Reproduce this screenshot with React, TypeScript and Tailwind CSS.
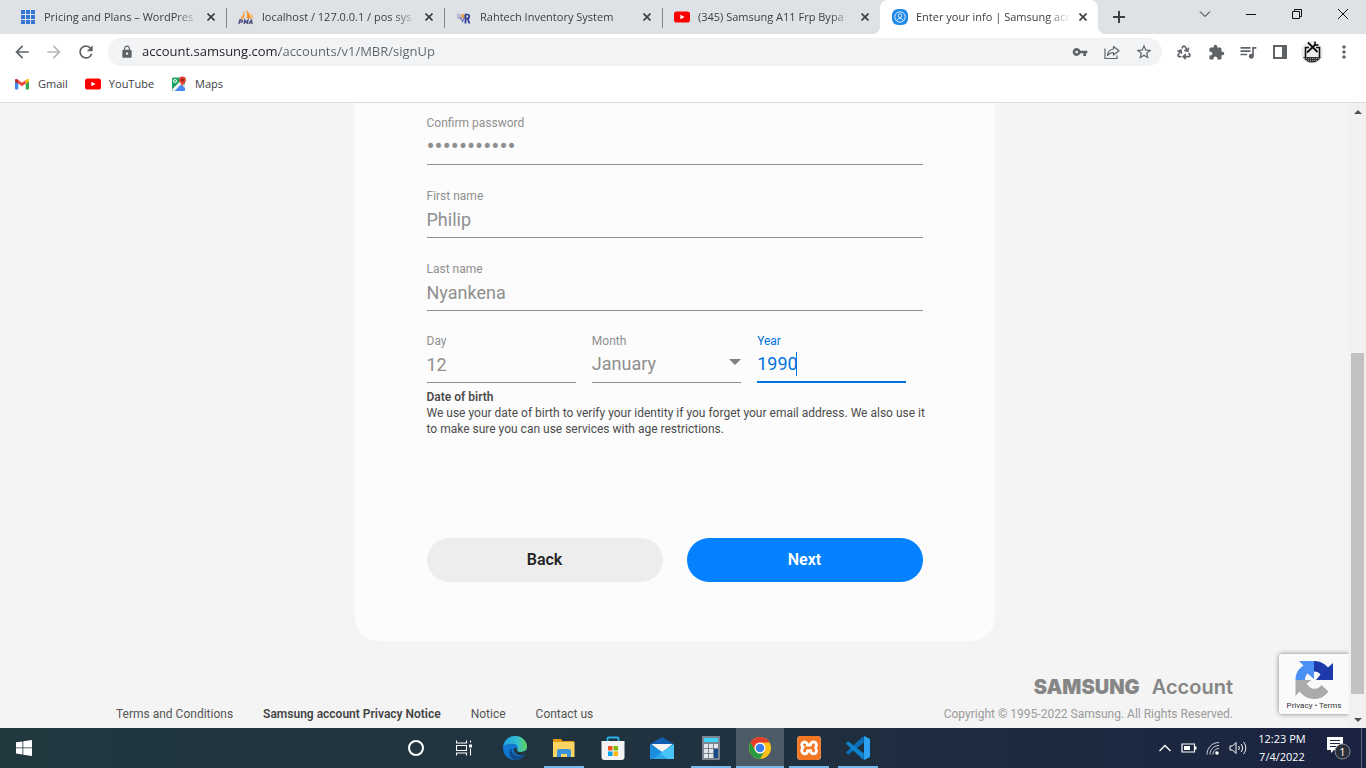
import { useState } from 'react';
import type { ReactNode } from 'react';
import { Recycle } from 'lucide-react';
import {
  MdArrowBack,
  MdArrowForward,
  MdExtension,
  MdLock,
  MdMoreVert,
  MdQueueMusic,
  MdRefresh,
  MdStarBorder,
  MdVpnKey,
} from 'react-icons/md';
import { SiXampp } from 'react-icons/si';

const months = [
  'January', 'February', 'March', 'April', 'May', 'June',
  'July', 'August', 'September', 'October', 'November', 'December',
];

/* ---------- favicons ---------- */

function GridIcon() {
  return (
    <svg className="w-4 h-4" viewBox="0 0 16 16" fill="#3376d6">
      {[1, 6, 11].map(y => [1, 6, 11].map(x => <rect key={`${x}-${y}`} x={x} y={y} width="4" height="4" />))}
    </svg>
  );
}

function PmaIcon() {
  return (
    <svg className="w-4 h-4" viewBox="0 0 16 16">
      <path d="M6 1.500C7 4 6.800 7 5.500 9.500L2 10C4 8 5.500 5 6 1.500z" fill="#f9a13a" />
      <path d="M8 1c3 2 4.500 5 5 8.500L8.500 9C9.500 6 9.300 3.500 8 1z" fill="#f7931e" />
      <path d="M12 3.500c2 1.500 3 3.500 3.500 6L13.500 9.500C13.500 7 13 5 12 3.500z" fill="#f9b866" />
      <path d="M1 15l.8-4h1.700c1.500 0 1.300 2.200-.3 2.200H1.500M6 15l.8-4L8 13.500 10 11l-.6 4M11 15l2.300-4 .9 4M12 13.700h2" fill="none" stroke="#4b4f7d" strokeWidth="1.300" />
    </svg>
  );
}

function RahtechIcon() {
  return (
    <svg className="w-4 h-4" viewBox="0 0 16 16" fill="none">
      <path d="M1.500 6.500c0-2 2.500-2 2.500 0v3M1.500 6.500c0 2 1 3 2.500 3.500" stroke="#a9a3c4" strokeWidth="1.200" />
      <circle cx="7" cy="7" r="2" fill="#e9a13c" />
      <path d="M4.500 8l2 4.500L8.500 8" stroke="#6d6fb2" strokeWidth="1.200" />
      <path d="M9.500 14.500V5.500h1.800c2.500 0 2.500 4 0 4H10M11.500 9.500l2 5" stroke="#2b3a93" strokeWidth="1.700" />
    </svg>
  );
}

function YoutubeIcon() {
  return (
    <svg className="w-4 h-4" viewBox="0 0 16 16">
      <rect y="2.500" width="16" height="11" rx="2.600" fill="#f00" />
      <path d="M6.400 5.700v4.600L10.500 8z" fill="#fff" />
    </svg>
  );
}

function SamsungIcon() {
  return (
    <svg className="w-4 h-4" viewBox="0 0 16 16" fill="none">
      <rect width="16" height="16" rx="6" fill="#2189e8" />
      <circle cx="8" cy="8" r="5.200" stroke="#d5eafd" />
      <circle cx="8" cy="6.600" r="1.800" stroke="#d5eafd" />
      <path d="M4.800 11.700c.7-3 5.700-3 6.400 0" stroke="#d5eafd" />
    </svg>
  );
}

function GmailIcon() {
  return (
    <svg className="w-4 h-4" viewBox="0 0 16 16">
      <path d="M1 4.500v8a1 1 0 0 0 1 1h2.300V6.800z" fill="#4285f4" />
      <path d="M15 4.500v8a1 1 0 0 1-1 1h-2.300V6.800z" fill="#34a853" />
      <path d="M4.300 4v3.500L8 10.200l3.700-2.700V4L8 6.700z" fill="#ea4335" />
      <path d="M1 4.200v1.200l3.300 2.400V4C3 2.700 1 2.700 1 4.200z" fill="#c5221f" />
      <path d="M15 4.200v1.200l-3.300 2.400V4C13 2.700 15 2.700 15 4.200z" fill="#fbbc04" />
    </svg>
  );
}

function MapsIcon() {
  return (
    <svg className="w-4 h-4" viewBox="0 0 16 16">
      <rect x="1" y="1.500" width="13" height="13.500" rx="1.500" fill="#1fa463" />
      <path d="M2 15L9.500 7.500 14 12v1.500a1.500 1.500 0 0 1-1.500 1.500z" fill="#4a89f3" />
      <path d="M1 13.500L13 1.500h1v3L3.500 15H2.300z" fill="#f5f5f5" />
      <path d="M9.500 7.500l4.500 4.700V8z" fill="#dadce0" />
      <circle cx="4" cy="5" r="1.500" fill="none" stroke="#fff" />
      <path d="M11.500.5a3.500 3.500 0 0 0-3.500 3.500c0 2.400 2.600 3 3.500 6.500.9-3.500 3.500-4.100 3.500-6.500A3.500 3.500 0 0 0 11.500.5z" fill="#e0402f" />
      <circle cx="11.500" cy="4" r="1.200" fill="#7d1d14" />
    </svg>
  );
}

/* ---------- browser chrome ---------- */

interface TabInfo {
  title: string;
  icon: ReactNode;
  active?: boolean;
  divider?: boolean;
}

const tabs: TabInfo[] = [
  { title: 'Pricing and Plans – WordPres', icon: <GridIcon />, divider: true },
  { title: 'localhost / 127.0.0.1 / pos sys', icon: <PmaIcon />, divider: true },
  { title: 'Rahtech Inventory System', icon: <RahtechIcon />, divider: true },
  { title: '(345) Samsung A11 Frp Bypa', icon: <YoutubeIcon /> },
  { title: 'Enter your info | Samsung acc', icon: <SamsungIcon />, active: true },
];

function Tab({ title, icon, active, divider }: TabInfo) {
  return (
    <div
      className={`relative flex items-center w-[218px] h-[34px] pl-3 pr-[7px] ${active ? 'bg-white rounded-t-lg' : ''}`}
    >
      {icon}
      <span className="ml-2 flex-1 min-w-0 overflow-hidden whitespace-nowrap text-[11px] text-[#3c4043] [mask-image:linear-gradient(to_right,black_85%,transparent)]">
        {title}
      </span>
      <button aria-label="Close tab" className="ml-1 w-4 h-4 flex items-center justify-center">
        <svg className="w-2 h-2" viewBox="0 0 8 8" stroke="#3c4043" strokeWidth="1.700">
          <path d="M.5.5l7 7M7.500.5l-7 7" />
        </svg>
      </button>
      {divider && <span className="absolute -right-px top-2 w-px h-5 bg-[#80868b]" />}
      {active && (
        <>
          <span className="absolute -left-2 bottom-0 w-2 h-2 bg-[radial-gradient(circle_at_0_0,transparent_8px,white_8px)]" />
          <span className="absolute -right-2 bottom-0 w-2 h-2 bg-[radial-gradient(circle_at_100%_0,transparent_8px,white_8px)]" />
        </>
      )}
    </div>
  );
}

function WindowButton({ label, children }: { label: string; children: ReactNode }) {
  return (
    <button aria-label={label} className="w-[46px] h-7 flex items-center justify-center">
      <svg className="w-3 h-3" viewBox="0 0 12 12" fill="none" stroke="#111" strokeWidth="1">
        {children}
      </svg>
    </button>
  );
}

function TabStrip() {
  return (
    <div className="flex h-[34px] pl-2 bg-[#dee1e6] shrink-0">
      {tabs.map(t => <Tab key={t.title} {...t} />)}
      <button aria-label="New tab" className="ml-[7px] w-7 h-[34px] flex items-center justify-center">
        <svg className="w-3 h-3" viewBox="0 0 12 12" stroke="#3c4043" strokeWidth="2">
          <path d="M6 0v12M0 6h12" />
        </svg>
      </button>
      <div className="flex ml-auto">
        <WindowButton label="Search tabs"><path d="M1 3.500l5 5 5-5" /></WindowButton>
        <WindowButton label="Minimize"><path d="M1 6.500h10" /></WindowButton>
        <WindowButton label="Restore"><path d="M1.500 3.500h7v7h-7zM3.500 3.500v-2h7v7h-2" /></WindowButton>
        <WindowButton label="Close"><path d="M1 1l10 10M11 1L1 11" /></WindowButton>
      </div>
    </div>
  );
}

function IconButton({ label, children }: { label: string; children: ReactNode }) {
  return (
    <button aria-label={label} className="w-8 h-7 flex items-center justify-center text-[#5f6368]">
      {children}
    </button>
  );
}

function Toolbar() {
  const [url, setUrl] = useState('account.samsung.com/accounts/v1/MBR/signUp');

  return (
    <div className="flex items-center h-9 pl-1.5 pr-1.5 bg-white shrink-0">
      <IconButton label="Back"><MdArrowBack size={20} /></IconButton>
      <IconButton label="Forward"><MdArrowForward size={20} className="text-[#b4b7ba]" /></IconButton>
      <IconButton label="Reload"><MdRefresh size={20} /></IconButton>
      <div className="flex flex-1 items-center h-7 ml-1.5 pl-3 pr-0.5 rounded-full bg-[#f1f3f4]">
        <MdLock size={14} className="text-[#5f6368]" />
        {/* the host part is darker than the path */}
        <input
          aria-label="Address"
          value={url}
          onChange={e => setUrl(e.target.value)}
          className="ml-2 flex-1 min-w-0 text-[13px] outline-none text-transparent bg-clip-text bg-[linear-gradient(to_right,#202124_137px,#5f6368_137px)]"
        />
        <IconButton label="Passwords"><MdVpnKey size={16} /></IconButton>
        <IconButton label="Share">
          <svg className="w-4 h-4" viewBox="0 0 16 16" fill="none" stroke="currentColor" strokeWidth="1.200">
            <path d="M1 4.500v10h12V11.500" />
            <path d="M9.500 2.500l5.500 4.200-5.500 4.300V8.500C7 8.500 5 9.500 3.500 11.500 4 7.500 6.500 5.300 9.500 5z" strokeLinejoin="round" />
          </svg>
        </IconButton>
        <IconButton label="Bookmark"><MdStarBorder size={18} /></IconButton>
      </div>
      <div className="flex items-center ml-1.5">
        <IconButton label="Recycle"><Recycle size={16} strokeWidth={2.5} /></IconButton>
        <IconButton label="Extensions"><MdExtension size={17} /></IconButton>
        <IconButton label="Media"><MdQueueMusic size={20} /></IconButton>
        <IconButton label="Side panel">
          <svg className="w-3.5 h-3.5" viewBox="0 0 14 14">
            <path d="M0 0h14v14H0zM2 2v10h7V2z" fill="currentColor" fillRule="evenodd" />
          </svg>
        </IconButton>
        <IconButton label="Profile">
          <svg className="w-[22px] h-[22px]" viewBox="0 0 22 22" fill="none">
            <circle cx="11" cy="11" r="11" fill="#ececec" />
            <path d="M4.500 16V6.500H8M15 6.500h3.500V16" stroke="#111" strokeWidth="1.600" />
            <path d="M7 1.500l9.500 9.500M15 3L6 11.500" stroke="#111" strokeWidth="1.800" />
            <path d="M14 .5v3.500h3.500" stroke="#111" strokeWidth="1.500" />
            <path d="M2 16h18c-1.500 3.500-4.500 5.500-9 5.500S3.500 19.500 2 16z" fill="#333" />
            <path d="M3 17.500h16M5 19.500h12" stroke="#bbb" strokeWidth=".8" strokeDasharray="1 1" />
          </svg>
        </IconButton>
        <IconButton label="Menu"><MdMoreVert size={20} /></IconButton>
      </div>
    </div>
  );
}

function BookmarkBar() {
  return (
    <nav className="flex items-center h-[33px] pl-3.5 pb-1 gap-[17px] bg-white border-b border-[#dadce0] text-[11px] text-[#3c4043] shrink-0">
      <a href="#gmail" className="flex items-center gap-2"><GmailIcon />Gmail</a>
      <a href="#youtube" className="flex items-center gap-2"><YoutubeIcon />YouTube</a>
      <a href="#maps" className="flex items-center gap-2"><MapsIcon />Maps</a>
    </nav>
  );
}

/* ---------- sign up page ---------- */

interface FieldProps {
  id: string;
  label: string;
  value: string;
  onChange: (v: string) => void;
  type?: string;
  active?: boolean;
}

function Field({ id, label, value, onChange, type = 'text', active }: FieldProps) {
  return (
    <div className={`relative flex flex-col ${active ? 'text-[#0072de]' : 'text-[#8f8f8f]'}`}>
      <label htmlFor={id} className="text-xs leading-4">{label}</label>
      <input
        id={id}
        type={type}
        value={value}
        onChange={e => onChange(e.target.value)}
        className={`w-full h-[34px] pb-[3px] outline-none caret-transparent ${type === 'password' ? 'text-2xl' : 'text-lg'} ${active ? 'border-b-2 border-[#0072de]' : 'border-b border-[#8f8f8f]'}`}
      />
      {active && <span className="absolute left-[39px] top-[19px] w-px h-6 bg-[#0072de]" />}
    </div>
  );
}

function SignUpCard() {
  const [password, setPassword] = useState('password123');
  const [firstName, setFirstName] = useState('Philip');
  const [lastName, setLastName] = useState('Nyankena');
  const [day, setDay] = useState('12');
  const [month, setMonth] = useState('January');
  const [year, setYear] = useState('1990');

  return (
    <form className="w-[640px] max-w-full mx-auto px-[72px] pt-3 pb-[59px] bg-[#fcfcfc] rounded-b-3xl" onSubmit={e => e.preventDefault()}>
      <div className="flex flex-col gap-[23px]">
        <Field id="confirm" label="Confirm password" type="password" value={password} onChange={setPassword} />
        <Field id="first" label="First name" value={firstName} onChange={setFirstName} />
        <Field id="last" label="Last name" value={lastName} onChange={setLastName} />
      </div>
      <div className="grid grid-cols-3 gap-4 mt-[22px] pr-4">
        <Field id="day" label="Day" value={day} onChange={setDay} />
        <div className="relative flex flex-col text-[#8f8f8f]">
          <label htmlFor="month" className="text-xs leading-4">Month</label>
          <select
            id="month"
            value={month}
            onChange={e => setMonth(e.target.value)}
            className="w-full h-[34px] pb-[3px] text-lg appearance-none outline-none border-b border-[#8f8f8f]"
          >
            {months.map(m => <option key={m}>{m}</option>)}
          </select>
          <svg className="absolute right-0 top-[26px] w-3 h-1.5 pointer-events-none" viewBox="0 0 12 6" fill="#808080">
            <path d="M0 0h12L6 6z" />
          </svg>
        </div>
        <Field id="year" label="Year" value={year} onChange={setYear} active />
      </div>

      <div className="mt-1.5 text-xs leading-4 text-[#4c4c4c] sm:whitespace-nowrap">
        <h2 className="font-semibold">Date of birth</h2>
        <p>
          We use your date of birth to verify your identity if you forget your email address. We also use it
          <br />
          to make sure you can use services with age restrictions.
        </p>
      </div>

      <div className="grid grid-cols-2 gap-6 mt-[101px]">
        <button type="button" className="h-11 rounded-full bg-[#ededed] text-base font-semibold text-[#252525]">Back</button>
        <button type="submit" className="h-11 rounded-full bg-[#0381fe] text-base font-semibold text-white">Next</button>
      </div>
    </form>
  );
}

function Footer() {
  return (
    <footer className="flex items-end justify-between px-[116px] pt-8 text-xs text-[#555]">
      <nav className="flex gap-[30px]">
        <a href="#terms">Terms and Conditions</a>
        <a href="#privacy" className="font-semibold text-[#444]">Samsung account Privacy Notice</a>
        <a href="#notice">Notice</a>
        <a href="#contact">Contact us</a>
      </nav>
      <div className="flex flex-col items-end">
        <div className="flex items-center gap-3 h-7 font-[Inter] text-xl text-[#868686]">
          <span className="font-black">SAMSUNG</span>
          <span className="font-semibold">Account</span>
        </div>
        <p className="mt-[5px] text-[#9a9a9a]">Copyright © 1995-2022 Samsung. All Rights Reserved.</p>
      </div>
    </footer>
  );
}

function RecaptchaBadge() {
  return (
    <div className="absolute right-0 bottom-3.5 w-[70px] h-[60px] flex flex-col items-center pt-1.5 bg-[#fafafa] rounded-l-xs shadow-[0_0_5px_gray] [clip-path:inset(-6px_0_-6px_-6px)]">
      <svg className="w-10 h-10" viewBox="0 0 40 40">
        <path d="M39 20V3l-5 4.500C30 3 25 1 20 1v10.500c3 0 5 1 6.500 3L22 20z" fill="#1c3aa9" />
        <path d="M20 1H5l4.500 4.500C4 9 1.500 14 1.500 20H11c0-3 1-5 2.500-6.500L20 19z" fill="#4a90f5" />
        <path d="M1.500 20v16l4-4.500C9 36 14 39 20 39c6 0 11-2.500 14.500-7.500L27.500 25c-3 4.500-9 5-12.500 1.500-1-1-1.800-2-2.200-3L17.500 20z" fill="#ababab" />
      </svg>
      <div className="text-[8px] leading-3 text-[#333]">
        <a href="#recaptcha-privacy">Privacy</a> • <a href="#recaptcha-terms">Terms</a>
      </div>
    </div>
  );
}

function Scrollbar() {
  return (
    <div className="flex flex-col w-[17px] px-0.5 bg-[#f1f1f1] shrink-0">
      <div className="h-[17px] flex items-center justify-center">
        <svg className="w-2 h-1" viewBox="0 0 8 4" fill="#505050"><path d="M0 4h8L4 0z" /></svg>
      </div>
      <div className="grow-[233]" />
      <div className="grow-[341] bg-[#c1c1c1]" />
      <div className="grow-[17]" />
      <div className="h-[17px] flex items-center justify-center">
        <svg className="w-2 h-1" viewBox="0 0 8 4" fill="#505050"><path d="M0 0h8L4 4z" /></svg>
      </div>
    </div>
  );
}

/* ---------- taskbar ---------- */

function EdgeIcon() {
  return (
    <svg className="w-6 h-6" viewBox="0 0 24 24">
      <defs>
        <linearGradient id="edgeTop" x1="0" y1="0.4" x2="1" y2="0.4">
          <stop offset="0" stopColor="#1f9fe0" />
          <stop offset="0.6" stopColor="#35c1d0" />
          <stop offset="1" stopColor="#5fd54f" />
        </linearGradient>
      </defs>
      <circle cx="12" cy="12" r="12" fill="#1277cf" />
      <path d="M.2 10.500C1.200 4 6.200 0 12 0c6.800 0 12 5 12 10.300 0 3.500-2.700 5.700-5.800 5.700-3 0-4.500-1.200-4-2.200 1.800-2.700-.2-6-4-6C5.500 7.800 1.200 8.500.2 10.500z" fill="url(#edgeTop)" />
      <path d="M8.500 12.500c-.5 5 4.500 8.500 9.500 7.300 2-.5 3.500-1.300 4.300-1.300C20 22 16.500 24 12.500 24c-5-1-8.500-7-4-11.500z" fill="#114a8b" />
      <path d="M14.200 13.800c-.7 1.300 1.300 2.300 4 2.300 2.200 0 4.300-1 5.300-2.800.6 2-.2 3.800-1.300 5.300-5 2.200-12.500-.3-11.300-6.100 2-1 3.500-.5 3.300 1.300z" fill="#22343f" />
    </svg>
  );
}

function ExplorerIcon() {
  return (
    <svg className="w-6 h-6" viewBox="0 0 24 24">
      <path d="M1 3h8l1.500 2H22v4H1z" fill="#e09a10" />
      <path d="M1 6h21.500v15H1z" fill="#fcd462" />
      <path d="M5 21v-6a2 2 0 0 1 2-2h10a2 2 0 0 1 2 2v6h-4v-3H9v3z" fill="#3e94d8" />
    </svg>
  );
}

function StoreIcon() {
  return (
    <svg className="w-6 h-6" viewBox="0 0 24 24">
      <path d="M6.500 6V2.500a1 1 0 0 1 1-1h9a1 1 0 0 1 1 1V6" fill="none" stroke="#2bb0ee" strokeWidth="1.800" />
      <path d="M.5 5h23v16a3 3 0 0 1-3 3h-17a3 3 0 0 1-3-3z" fill="#f3f3f3" />
      <path d="M7 10h4.500v4.500H7z" fill="#f25022" />
      <path d="M12.500 10H17v4.500h-4.500z" fill="#7fba00" />
      <path d="M7 15.500h4.500V20H7z" fill="#00a4ef" />
      <path d="M12.500 15.500H17V20h-4.500z" fill="#ffb900" />
    </svg>
  );
}

function MailIcon() {
  return (
    <svg className="w-6 h-6" viewBox="0 0 24 24">
      <path d="M0 8l12-7 12 7v3H0z" fill="#0f5fae" />
      <path d="M1.500 8h21L12 17z" fill="#f6f6f6" />
      <path d="M0 8l12 8 12-8v15H0z" fill="#2ea8ea" />
      <path d="M2 8h20l-10 7z" fill="#f6f6f6" />
      <path d="M24 8L10 17.500 18 23h6z" fill="#47c3f5" />
      <path d="M0 8v15h3l9-7z" fill="#1b8ee0" />
    </svg>
  );
}

function CalculatorIcon() {
  const keys = [0, 1, 2].flatMap(r => [0, 1, 2].map(c => ({ r, c })));
  return (
    <svg className="w-6 h-6" viewBox="0 0 24 24">
      <rect x="3" width="18" height="24" rx="1" fill="#7c8592" />
      <rect x="5" y="2" width="14" height="4" fill="#3fd3f7" />
      {keys.map(({ r, c }) => (
        <rect key={`${r}${c}`} x={5 + c * 5} y={8 + r * 5} width="4" height="4" fill={c === 2 && r > 0 ? '#184a8c' : '#e2e6ea'} />
      ))}
      <rect x="15" y="13" width="4" height="9" fill="#184a8c" />
    </svg>
  );
}

function ChromeIcon() {
  return (
    <svg className="w-6 h-6" viewBox="0 0 24 24">
      <circle cx="12" cy="12" r="11" fill="#fbc116" />
      <path d="M2.500 6.500A11 11 0 0 1 21.500 6.500H12a5.500 5.500 0 0 0-4.800 8.200z" fill="#e33b2e" />
      <path d="M2.500 6.500A11 11 0 0 0 12 23l4.800-8.300A5.500 5.500 0 0 1 7.200 14.700z" fill="#269a43" />
      <circle cx="12" cy="12" r="5.500" fill="#fff" />
      <circle cx="12" cy="12" r="4.300" fill="#3b7ded" />
    </svg>
  );
}

function XamppIcon() {
  return (
    <span className="w-6 h-6 flex bg-white rounded-sm overflow-hidden text-[#f37623]">
      <SiXampp size={24} />
    </span>
  );
}

function VscodeIcon() {
  return (
    <svg className="w-6 h-6" viewBox="0 0 24 24">
      <path d="M.5 15.800L17.500 0 18 6.500 2.800 18.200a1 1 0 0 1-1.200 0L.5 17.200a1 1 0 0 1 0-1.400z" fill="#0a6fb8" />
      <path d="M.5 8.200L17.500 24l.5-6.500L2.800 5.800a1 1 0 0 0-1.200 0L.5 6.800a1 1 0 0 0 0 1.400z" fill="#0f83cd" />
      <path d="M18 0l5.200 2.400a1.400 1.400 0 0 1 .8 1.300v16.600a1.400 1.400 0 0 1-.8 1.300L18 24z" fill="#2ba3f2" />
    </svg>
  );
}

const apps = [
  { name: 'Edge', icon: <EdgeIcon />, running: false },
  { name: 'File Explorer', icon: <ExplorerIcon />, running: true },
  { name: 'Microsoft Store', icon: <StoreIcon />, running: false },
  { name: 'Mail', icon: <MailIcon />, running: false },
  { name: 'Calculator', icon: <CalculatorIcon />, running: true },
  { name: 'Chrome', icon: <ChromeIcon />, running: true, focused: true },
  { name: 'XAMPP', icon: <XamppIcon />, running: true },
  { name: 'Visual Studio Code', icon: <VscodeIcon />, running: true },
];

function Taskbar() {
  return (
    <div className="flex h-10 shrink-0 bg-linear-to-r from-[#21383f] via-[#20323f] to-[#1a2340] text-white">
      <button aria-label="Start" className="w-12 flex items-center justify-center">
        <svg className="w-4 h-4" viewBox="0 0 16 16" fill="#fff">
          <path d="M0 2.300L6.500 1.400v6.100H0zM7.300 1.300L16 0v7.500H7.300zM0 8.300h6.500v6.200L0 13.600zM7.300 8.300H16V16l-8.700-1.300z" />
        </svg>
      </button>
      <button aria-label="Cortana" className="w-12 ml-[344px] flex items-center justify-center">
        <span className="w-4 h-4 rounded-full border-2 border-white" />
      </button>
      <button aria-label="Task view" className="w-12 flex items-center justify-center">
        <svg className="w-4 h-4" viewBox="0 0 16 16" fill="none" stroke="#fff" strokeWidth="1.100">
          <path d="M.5.500v2.500h10V.5M.5 15.500V13h10v2.500M.5 5.500h10v5H.5zM14.500.500v2M14.500 8.500v7" />
          <path d="M13 4.500h3v3h-3z" fill="#fff" stroke="none" />
        </svg>
      </button>
      <div className="flex gap-px ml-[3px]">
        {apps.map(a => (
          <button
            key={a.name}
            aria-label={a.name}
            className={`relative w-12 flex items-center justify-center ${a.focused ? 'bg-[#4c5b66]' : ''}`}
          >
            {a.icon}
            {a.running && (
              <span className={`absolute bottom-0 h-0.5 bg-[#76b9ed] ${a.focused ? 'inset-x-0' : 'inset-x-1'}`} />
            )}
          </button>
        ))}
      </div>

      <div className="flex items-center ml-auto">
        <div className="flex items-center gap-2">
          <svg className="w-4 h-4" viewBox="0 0 16 16" fill="none" stroke="#fff" strokeWidth="1.300"><path d="M2.500 11L8 5.500l5.500 5.500" /></svg>
          <svg className="w-4 h-4" viewBox="0 0 16 16" fill="none" stroke="#fff">
            <path d="M1 4h12.500v8H1z" strokeWidth="1.200" />
            <path d="M14 6.500h1.500v3H14zM3 6h6v4H3z" fill="#fff" stroke="none" />
          </svg>
          <svg className="w-4 h-4" viewBox="0 0 16 16" fill="none" stroke="#fff">
            <path d="M2 14.500C2 8 7 2.500 14 2.500M5 14.500c0-5 4-9 9-9M8 14.500c0-3.300 2.700-6 6-6" opacity="0.8" />
            <circle cx="12" cy="13" r="1.800" fill="#fff" stroke="none" />
          </svg>
          <svg className="w-[18px] h-4" viewBox="0 0 18 16" fill="none" stroke="#fff">
            <path d="M1 6h2.500L7 2.500v11L3.500 10H1zM9.500 6c1 1.200 1 2.800 0 4M12 4c2 2.400 2 5.600 0 8M14.500 2c3 3.600 3 8.400 0 12" />
          </svg>
        </div>
        <div className="w-[70px] text-center text-[11px] leading-[18px]">
          <div>12:23 PM</div>
          <div>7/4/2022</div>
        </div>
        <button aria-label="Notifications" className="w-11 h-10 flex items-center justify-center">
          <svg className="w-6 h-6" viewBox="0 0 24 24">
            <path d="M0 1h16v13H7l-3 3v-3H0z" fill="#fff" />
            <path d="M3 4.500h10M3 7.500h10M3 10.500h6" stroke="#1a2340" />
            <circle cx="15.500" cy="15.500" r="7.500" fill="#2b2f3a" stroke="#888d96" />
            <text x="15.500" y="19.500" textAnchor="middle" fontSize="11" fill="#fff">1</text>
          </svg>
        </button>
        <span className="w-px h-10 mr-1 bg-[#5c6478]" />
      </div>
    </div>
  );
}

export default function App() {
  return (
    <div className="flex flex-col h-screen overflow-hidden font-['Open_Sans',sans-serif]">
      <TabStrip />
      <Toolbar />
      <BookmarkBar />
      <div className="flex flex-1 min-h-0">
        <main className="relative flex-1 overflow-hidden bg-[#f4f4f4] font-[Roboto,sans-serif]">
          <SignUpCard />
          <Footer />
          <RecaptchaBadge />
        </main>
        <Scrollbar />
      </div>
      <Taskbar />
    </div>
  );
}
